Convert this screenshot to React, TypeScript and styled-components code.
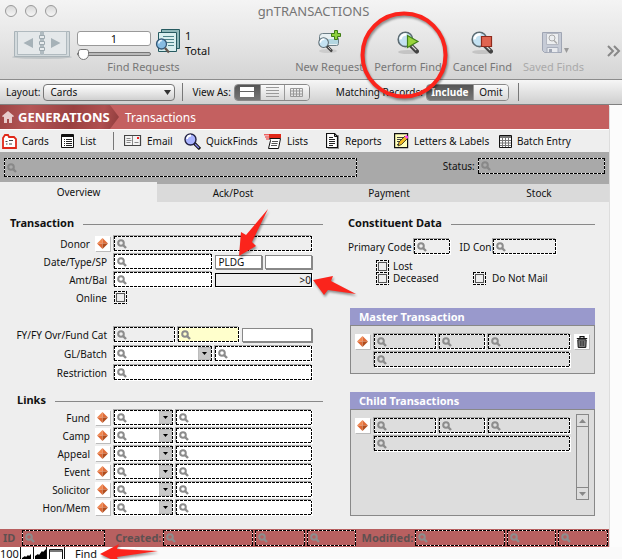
import React from "react";
import styled, { createGlobalStyle, css } from "styled-components";

const sans = `"Noto Sans", sans-serif`;

const GlobalStyle = createGlobalStyle`
  *, *::before, *::after { box-sizing: border-box; }
  body { margin: 0; background: #fcfcfc; color: #111; font-family: ${sans}; font-size: 10px; }
  button, input, select { font: inherit; color: inherit; margin: 0; padding: 0; border: 0; background: none; border-radius: 0; outline: 0; }
  a { color: inherit; text-decoration: none; }
  h1, h2, p { margin: 0; }
  svg { display: block; flex: none; }
`;

const Page = styled.div`
  position: relative;
  display: flex;
  flex-direction: column;
  height: 100vh;
  overflow: hidden;
`;

/* ---------- window chrome ---------- */

const Chrome = styled.header`
  height: 80px;
  flex: none;
  background: linear-gradient(#f4f4f4, #e6e6e6 50%, #d4d4d4);
  border-bottom: 1px solid #8c8c8c;
  color: #777;
`;

const TitleBar = styled.div`
  display: grid;
  grid-template-columns: 1fr auto 1fr;
  align-items: center;
  height: 22px;
  padding-left: 5px;
`;

const Lights = styled.div`
  display: flex;
  gap: 8px;
`;

const Light = styled.button`
  && {
    width: 12px;
    height: 12px;
    border: 1px solid #9a9a9a;
    border-radius: 50%;
    background: linear-gradient(#d8d8d8, #f6f6f6);
  }
`;

const Title = styled.h1`
  font-size: 13px;
  line-height: 20px;
  font-weight: 400;
  color: #757575;
`;

const ToolRow = styled.div`
  display: flex;
  align-items: flex-start;
  height: 56px;
  padding: 6px 0 0 11px;
`;

const Requests = styled.div`
  display: grid;
  grid-template-columns: 62px 74px 26px auto;
  column-gap: 4px;
  width: 205px;
`;

const Counter = styled.div`
  display: flex;
  flex-direction: column;
  gap: 1px;
  padding-top: 3px;
`;

const CountInput = styled.input`
  && {
    width: 100%;
    height: 15px;
    border: 1px solid #999;
    border-radius: 3px;
    background: #fff;
    color: #111;
    font-size: 11px;
    line-height: 13px;
    text-align: center;
  }
`;

const Slider = styled.input`
  appearance: none;
  width: 100%;
  height: 13px;
  &::-webkit-slider-runnable-track {
    height: 4px;
    border: 1px solid #777;
    border-radius: 2px;
    background: #bbb;
  }
  &::-webkit-slider-thumb {
    appearance: none;
    width: 11px;
    height: 11px;
    margin-top: -4px;
    border: 1px solid #777;
    border-radius: 3px 3px 6px 6px;
    background: #fff;
  }
`;

const Total = styled.p`
  font-size: 11px;
  line-height: 15px;
  color: #111;
`;

const Caption = styled.p`
  grid-column: 1 / -1;
  padding-left: 60px;
  width: 205px;
  font-size: 11px;
  line-height: 14px;
  text-align: center;
`;

const Tools = styled.div`
  display: flex;
  flex: 1;
  justify-content: flex-end;
  gap: 11px;
  align-items: flex-start;
  padding-right: 1px;
`;

const Tool = styled.button<{ $dim?: boolean }>`
  && {
    display: flex;
    flex-direction: column;
    align-items: center;
    gap: 5px;
    font-size: 11px;
    line-height: 16px;
    white-space: nowrap;
    color: ${(p) => (p.$dim ? "#aaa" : "#777")};
  }
`;

const LayoutBar = styled.div`
  display: flex;
  flex: none;
  align-items: center;
  height: 25px;
  padding-left: 6px;
  background: linear-gradient(#f6f6f6, #cfcfcf);
  border-bottom: 1px solid #808080;
  font-size: 10px;
  line-height: 14px;
  white-space: nowrap;
`;

const BarItem = styled.div<{ $w: number }>`
  display: flex;
  align-items: center;
  justify-content: space-between;
  flex: none;
  min-width: ${(p) => p.$w}px;
  gap: 3px;
`;

const LayoutPick = styled.div`
  position: relative;
  flex: none;
  width: 132px;
  select {
    appearance: none;
    display: block;
    width: 100%;
    height: 17px;
    padding-left: 6px;
    border: 1px solid #777;
    border-radius: 4px;
    background: linear-gradient(#fff, #d0d0d0);
  }
  svg { position: absolute; right: 4px; top: 6px; pointer-events: none; }
`;

const Divider = styled.span<{ $h: number; $l?: number; $r?: number }>`
  flex: none;
  width: 1px;
  height: ${(p) => p.$h}px;
  margin: 0 ${(p) => p.$r ?? 0}px 0 ${(p) => p.$l ?? 0}px;
  background: #777;
`;

const Spacer = styled.span`
  flex: none;
  width: 26px;
`;

const Segments = styled.div`
  display: flex;
  flex: none;
  overflow: hidden;
  height: 17px;
  border: 1px solid #888;
  border-radius: 4px;
`;

const Segment = styled.button<{ $on?: boolean; $w: number }>`
  display: flex;
  align-items: center;
  justify-content: center;
  width: ${(p) => p.$w}px;
  background: ${(p) => (p.$on ? "linear-gradient(#555, #777)" : "linear-gradient(#fafafa, #d8d8d8)")};
  color: ${(p) => (p.$on ? "#fff" : "#111")};
  font-weight: ${(p) => (p.$on ? 700 : 400)};
  & + & { border-left: 1px solid #999; }
`;

/* ---------- layout body ---------- */

const Body = styled.main`
  display: flex;
  flex: none;
  flex-direction: column;
  margin-right: 13px;
  background: #eee;
  box-shadow: 1px 1px 0 #ddd;
`;

const Banner = styled.div`
  display: flex;
  align-items: center;
  height: 24px;
  background: #c46060;
  color: #fff;
`;

const Brand = styled.div`
  display: flex;
  align-items: center;
  gap: 4px;
  width: 119px;
  height: 24px;
  padding-left: 2px;
  background: linear-gradient(100deg, #9c4444, #b45656 25%, #9a4141 60%, #b05050 85%, #8e3c3c);
  clip-path: polygon(0 0, 110px 0, 100% 50%, 110px 100%, 0 100%);
  font-weight: 700;
  font-size: 13px;
  line-height: 24px;
`;

const BannerTitle = styled.p`
  margin-left: 6px;
  font-size: 12px;
`;

const Nav = styled.nav`
  display: flex;
  align-items: center;
  height: 23px;
  padding-left: 2px;
  border-top: 1px solid #fff;
`;

const NavLink = styled.a<{ $w: number }>`
  display: flex;
  align-items: center;
  flex: ${(p) => p.$w} 1 ${(p) => p.$w}px;
  gap: 5px;
  white-space: nowrap;
`;

const RecordStrip = styled.div`
  display: flex;
  align-items: flex-start;
  height: 32px;
  padding: 6px 4px 0;
  background: #a9a9a9;
`;

const StatusLabel = styled.label`
  display: flex;
  justify-content: flex-end;
  flex: 121 1 121px;
  padding-right: 3px;
  line-height: 17px;
`;

const Tabs = styled.div`
  display: grid;
  grid-template-columns: 157fr 152fr 160fr 140fr;
  height: 18px;
`;

const Tab = styled.button<{ $on?: boolean }>`
  && {
    line-height: 18px;
    background: ${(p) => (p.$on ? "#eee" : "#dadada")};
    ${(p) => p.$on && css`margin-top: -2px;`}
  }
`;

const dash = (deg: number) => `repeating-linear-gradient(${deg}deg, #000 0 3px, #fff 3px 4px)`;

const FieldBox = styled.span<{ $w?: number; $h?: number; $bg?: string; $bevel?: boolean }>`
  display: flex;
  align-items: center;
  flex: ${(p) => (p.$w ? `${p.$w} 1 ${p.$w}px` : "1 1 0")};
  min-width: 0;
  height: ${(p) => p.$h ?? 15}px;
  padding: 0 1px 0 3px;
  background:
    ${dash(90)} 0 0 / 100% 1px no-repeat,
    ${dash(90)} 0 100% / 100% 1px no-repeat,
    ${dash(180)} 0 0 / 1px 100% no-repeat,
    ${dash(180)} 100% 0 / 1px 100% no-repeat,
    ${(p) => p.$bg ?? "transparent"};
  ${(p) => p.$bevel && css`box-shadow: -1px -1px 0 #aaa, 1px 1px 0 #fff;`}
  input { flex: 1; width: 0; min-width: 0; height: 100%; }
`;

const PlainInput = styled.input<{ $w: number; $solid?: boolean }>`
  && {
    flex: ${(p) => p.$w} 1 ${(p) => p.$w}px;
    width: 0;
    min-width: 0;
    height: 14px;
    padding: 0 3px;
    border: 1px solid #888;
    background: #fff;
    box-shadow: 1px 1px 0 #888;
    ${(p) => p.$solid && css`
      padding: 0;
      border-color: #000;
      background: #eee;
      box-shadow: 1px 1px 0 #fff;
      text-align: right;
    `}
  }
`;

const DropButton = styled.button`
  && {
    display: flex;
    align-items: center;
    justify-content: center;
    flex: none;
    width: 13px;
    height: 13px;
    background: #c8c8c8;
    border: 1px solid #bbb;
  }
`;

const Columns = styled.div`
  display: flex;
  gap: 25px;
  height: 327px;
  padding: 13px 14px 0 10px;
`;

const Column = styled.div<{ $w: number }>`
  display: flex;
  flex-direction: column;
  flex: ${(p) => p.$w} 1 0;
  min-width: 0;
`;

const Heading = styled.h2<{ $inset?: number; $top?: number }>`
  display: flex;
  align-items: center;
  gap: 9px;
  margin-top: ${(p) => p.$top ?? 0}px;
  padding-left: ${(p) => p.$inset ?? 0}px;
  font-size: 11px;
  line-height: 16px;
  white-space: nowrap;
  &::after { content: ""; flex: 1; height: 1px; margin-top: 3px; background: #888; }
`;

const Rows = styled.div<{ $top?: number; $gap?: number }>`
  display: flex;
  flex-direction: column;
  gap: ${(p) => p.$gap ?? 3}px;
  padding: ${(p) => p.$top ?? 0}px 11px 0 0;
`;

const Row = styled.div`
  display: flex;
  align-items: center;
  gap: 3px;
  height: 15px;
`;

const RowLabel = styled.label<{ $jump?: boolean }>`
  flex: none;
  width: ${(p) => (p.$jump ? 80 : 97)}px;
  margin-right: ${(p) => (p.$jump ? 2 : 4)}px;
  text-align: right;
  white-space: nowrap;
`;

const JumpButton = styled.button`
  && {
    display: flex;
    align-items: center;
    justify-content: center;
    flex: none;
    width: 15px;
    height: 15px;
    margin-right: 1px;
    background: #fff;
    box-shadow: 1px 1px 0 #bbb;
  }
`;

const Check = styled.input`
  && {
    appearance: none;
    flex: none;
    width: 13px;
    height: 13px;
    background:
      linear-gradient(#eee, #eee) center / 7px 7px no-repeat,
      linear-gradient(#555, #555) center / 9px 9px no-repeat,
      ${dash(90)} 0 0 / 100% 1px no-repeat,
      ${dash(90)} 0 100% / 100% 1px no-repeat,
      ${dash(180)} 0 0 / 1px 100% no-repeat,
      ${dash(180)} 100% 0 / 1px 100% no-repeat;
  }
`;

const ConRow = styled.div`
  display: flex;
  align-items: center;
  gap: 2px;
  padding: 8px 39px 6px 0;
  white-space: nowrap;
`;

const ConLabel = styled.label`
  &:not(:first-child) { margin-left: 8px; }
`;

const Checks = styled.div`
  display: grid;
  grid-template-columns: 97fr 122fr;
  padding-left: 28px;
`;

const CheckLabel = styled.label<{ $second?: boolean }>`
  display: flex;
  align-items: center;
  gap: 4px;
  height: 12px;
  line-height: 12px;
  ${(p) => p.$second && css`grid-column: 2; gap: 6px;`}
`;

const Panel = styled.section<{ $h: number; $top: number }>`
  height: ${(p) => p.$h}px;
  margin: ${(p) => p.$top}px 0 0 2px;
  border: 1px solid #888;
  background: #ddd;
`;

const PanelTitle = styled.h2`
  height: 18px;
  margin: -1px -1px 0;
  padding-left: 9px;
  background: #99c;
  border-bottom: 1px solid #888;
  color: #fff;
  font-size: 11px;
  line-height: 17px;
`;

const PanelBody = styled.div`
  display: grid;
  grid-template-columns: 15px 1fr 15px;
  column-gap: 4px;
  padding: 8px 5px 0 4px;
`;

const PanelFields = styled.div`
  display: flex;
  flex-direction: column;
  gap: 3px;
`;

const PanelRow = styled.div`
  display: flex;
  gap: 3px;
`;

const ScrollTrack = styled.div`
  display: flex;
  flex-direction: column;
  justify-content: space-between;
  width: 13px;
  height: 86px;
  margin: -4px 0 0 2px;
  border: 1px solid #888;
`;

const ScrollButton = styled.button`
  && {
    display: flex;
    align-items: center;
    justify-content: center;
    height: 12px;
  }
  &&:first-child { border-bottom: 1px solid #888; }
  &&:last-child { border-top: 1px solid #888; }
`;

const Meta = styled.footer`
  display: flex;
  align-items: center;
  gap: 2px;
  height: 18px;
  padding: 0 1px 0 3px;
  background: #b86060;
  color: #5e5050;
  font-weight: 700;
  font-size: 11px;
`;

const MetaLabel = styled.label<{ $w: number; $start?: boolean }>`
  flex: none;
  width: ${(p) => p.$w}px;
  text-align: ${(p) => (p.$start ? "left" : "right")};
  line-height: 14px;
`;

const StatusBar = styled.div`
  display: flex;
  flex: none;
  height: 12px;
  line-height: 14px;
  font-size: 11px;
  background: linear-gradient(90deg, #fff 135px, #fafafa 135px);
`;

const StatusButton = styled.button<{ $w: number }>`
  && {
    display: flex;
    align-items: flex-end;
    justify-content: center;
    width: ${(p) => p.$w}px;
    height: 12px;
    border-right: 1px solid #111;
  }
`;

const Zoom = styled.span`
  width: 21px;
  border-right: 1px solid #111;
`;

const Mode = styled.span`
  padding-left: 10px;
`;

const Marks = styled.svg`
  position: absolute;
  left: 0;
  top: 0;
  pointer-events: none;
  filter: drop-shadow(1px 2px 1px rgba(0, 0, 0, 0.4));
`;

/* ---------- drawings ---------- */

const Loupe = ({ color = "#8c8c8c" }: { color?: string }) => (
  <svg width="10" height="10" viewBox="0 0 10 10" fill="none" stroke={color}>
    <circle cx="4" cy="4" r="2.800" strokeWidth="2" />
    <path d="M6 6l3 3" strokeWidth="2.400" />
  </svg>
);

const Diamond = () => (
  <svg width="11" height="11" viewBox="0 0 11 11">
    <path d="M5.500 0v5.500H0z" fill="#f08850" />
    <path d="M5.500 0L11 5.500H5.500z" fill="#e06c38" />
    <path d="M0 5.500h5.500V11z" fill="#dc6632" />
    <path d="M11 5.500L5.500 11V5.500z" fill="#b04c1c" />
  </svg>
);

const Caret = ({ w = 5, h = 3, color = "#000", up = false }) => (
  <svg width={w} height={h} viewBox="0 0 10 6" preserveAspectRatio="none"><path d={up ? "M0 6h10L5 0z" : "M0 0h10L5 6z"} fill={color} /></svg>
);

const Trash = () => (
  <svg width="12" height="12" viewBox="0 0 12 12">
    <path d="M4 2V.7h4V2M.8 2.500h10.400" stroke="#111" fill="none" strokeWidth="1.200" />
    <path d="M1.800 3.800h8.400L9.800 11.400H2.200z" fill="#888" stroke="#111" />
    <path d="M4.300 5v5M6 5v5M7.700 5v5" stroke="#222" strokeWidth=".8" />
  </svg>
);

const Book = () => (
  <svg width="62" height="32" viewBox="0 0 62 32">
    <ellipse cx="31" cy="29" rx="30" ry="2" fill="#bfc4c6" />
    <path d="M3.500 3.500h55v25h-55z" fill="#d3dadd" stroke="#a9b3b8" />
    <path d="M6.500 3.500h23v23h-23zM32.500 3.500h23v23h-23z" fill="#e4e8ea" stroke="#b0babf" />
    <path d="M22 10v10l-9.500-5zM40 10v10l9.500-5z" fill="#a6b2b8" />
    <path d="M31 4v23" stroke="#a6b2b8" strokeWidth="1.500" />
    <path d="M28.500 7.500h5v3h-5zM28.500 13.500h5v3h-5zM28.500 19.500h5v3h-5z" fill="#e8ecee" stroke="#9da9af" />
  </svg>
);

const Glass = ({ x = 0, y = 0, s = 1 }) => (
  <g transform={`translate(${x} ${y}) scale(${s})`}>
    <path d="M10.500 11l6 6" stroke="#444" strokeWidth="3.600" strokeLinecap="round" />
    <path d="M12.500 12.500l3.500 3.500" stroke="#ddd" strokeWidth="1" />
    <circle cx="7" cy="7" r="6" fill="#c4e2f2" stroke="#5c6b72" strokeWidth="1.300" />
    <path d="M3 7a4 4 0 0 1 5-4" stroke="#fff" strokeWidth="2" fill="none" />
  </g>
);

const Pages = () => (
  <svg width="26" height="26" viewBox="0 0 26 26">
    <path d="M6.500 1.500h18v19h-18z" fill="#8fb8ba" stroke="#265a60" />
    <path d="M3.500 4.500h18v19h-18z" fill="#d8eeee" stroke="#265a60" />
    <path d="M8 8.500h11M8 11.500h11M11 14.500h8M13 17.500h6" stroke="#4c8288" />
    <circle cx="6.500" cy="16" r="5" fill="#86bce2" stroke="#365a78" strokeWidth="1.300" />
    <path d="M3.800 15.500a3 3 0 0 1 3-3" stroke="#e8f6ff" strokeWidth="1.500" fill="none" />
    <path d="M10 20l4 4.500" stroke="#665850" strokeWidth="2.400" />
  </svg>
);

const NewRequestIcon = () => (
  <svg width="26" height="26" viewBox="0 0 26 26">
    <ellipse cx="12" cy="23" rx="9" ry="2" fill="#ccc" />
    <path d="M3.500 8.500q0-3 3-3h12l4 5v5q0 2-2 2h-15q-2 0-2-2z" fill="#e8f0f2" stroke="#6c7e86" />
    <path d="M4 11h18v5H4z" fill="#b4d6e0" />
    <Glass x={2} y={9} s={0.8} />
    <path d="M18.500 2.500h3v3h3v3h-3v3h-3v-3h-3v-3h3z" fill="#8ed03c" stroke="#3f7c14" />
  </svg>
);

const PerformIcon = () => (
  <svg width="26" height="26" viewBox="0 0 26 26">
    <ellipse cx="13" cy="24" rx="10" ry="2" fill="#c4c4c4" />
    <Glass x={2} y={3} s={1.2} />
    <path d="M12.500 7.500v12l10.500-6z" fill="#9ad43c" stroke="#42811a" strokeWidth="1.200" />
  </svg>
);

const CancelIcon = () => (
  <svg width="26" height="26" viewBox="0 0 26 26">
    <ellipse cx="13" cy="24" rx="10" ry="2" fill="#c4c4c4" />
    <Glass x={2} y={3} s={1.2} />
    <path d="M12.500 8.500h10v10h-10z" fill="#e06450" stroke="#8f2a1c" strokeWidth="1.200" />
  </svg>
);

const SavedIcon = () => (
  <svg width="32" height="26" viewBox="0 0 32 26">
    <path d="M5.500 4.500h19v20h-17l-2-2z" fill="#c6cbd6" stroke="#a0a6b4" />
    <path d="M9.500 5.500h12v11h-12z" fill="#eceef0" stroke="#b4b8c2" />
    <circle cx="15" cy="10" r="3" fill="none" stroke="#aaa" />
    <path d="M17 12.500l3 3" stroke="#aaa" strokeWidth="1.500" />
    <path d="M10 19.500h11v5H10z" fill="#e8eaee" stroke="#a8aebc" />
    <path d="M12 21h3v3h-3z" fill="#a0a6b4" />
    <path d="M27 20h5l-2.500 5z" fill="#999" />
  </svg>
);

const Home = () => (
  <svg width="12" height="13" viewBox="0 0 12 13"><path d="M6 0l6 5-1 1.200L10 5.500V12H7V8H5v4H2V5.500L1 6.200 0 5z" fill="#e8cccc" /></svg>
);

const CardsIcon = () => (
  <svg width="15" height="15" viewBox="0 0 15 15">
    <path d="M1 4l2-3h3l1 2h5l2 2v9H1z" fill="#fff" stroke="#e02818" strokeWidth="1.800" />
    <path d="M3.500 7.500h2M7 6.500h4M4 10h1.500M7 10h3" stroke="#444" />
  </svg>
);
const ListIcon = () => (
  <svg width="14" height="15" viewBox="0 0 14 15">
    <path d="M.5.500h12v13H.5z" fill="#fff" stroke="#111" /><path d="M1 2h11" stroke="#111" strokeWidth="2" />
    <path d="M3 5.500h1M5 5.500h6M3 7.500h1M5 7.500h6M3 9.500h1M5 9.500h6M3 11.500h1M5 11.500h6" stroke="#222" />
  </svg>
);
const MailIcon = () => (
  <svg width="18" height="12" viewBox="0 0 18 12">
    <path d="M.5.500h16v10H.5z" fill="#f4f4f4" stroke="#444" strokeWidth="1.200" />
    <path d="M2.500 3.500h4M2.500 5.500h5M2.500 7.500h4M8.500 1v9M10.500 7.500h4" stroke="#888" /><path d="M13 2h2v2h-2z" fill="#e22" />
  </svg>
);
const QuickIcon = () => (
  <svg width="17" height="17" viewBox="0 0 17 17">
    <path d="M10 10l6 6" stroke="#111" strokeWidth="3.200" /><path d="M11 11l4 4" stroke="#88e" strokeWidth="1.200" />
    <circle cx="6.500" cy="6.500" r="5.500" fill="#aab4ff" stroke="#224" strokeWidth="1.400" />
    <path d="M3 6a4 4 0 0 1 4-3.500" stroke="#fff" strokeWidth="1.800" fill="none" />
  </svg>
);
const ListsIcon = () => (
  <svg width="18" height="15" viewBox="0 0 18 15">
    <path d="M5.500 4.500h11l-2 10h-10l2-8z" fill="#fff" stroke="#111" />
    <path d="M0 .8h5M1 3h4M2 5h3" stroke="#e22" /><path d="M5 0h12v4H5z" fill="#e02818" />
    <path d="M8 7.500h6M7.500 9.500h6M7 11.500h6" stroke="#555" />
  </svg>
);
const ReportIcon = () => (
  <svg width="14" height="16" viewBox="0 0 14 16">
    <path d="M2 2h11v14H2z" fill="#999" /><path d="M.5.500h8l3 3v11H.5z" fill="#fff" stroke="#111" strokeWidth="1.200" />
    <path d="M8.500.500v3h3" stroke="#111" fill="none" /><path d="M3 4.500h4M3 6.500h6M3 8.500h6M3 10.500h6M3 12.500h4" stroke="#222" />
  </svg>
);
const LetterIcon = () => (
  <svg width="15" height="16" viewBox="0 0 15 16">
    <path d="M.6.600h13v14H.6z" fill="#ffffb8" stroke="#111" strokeWidth="1.200" />
    <path d="M3 4.500h7M3 6.500h5M3 8.500h4M3 11.500h3" stroke="#444" />
    <path d="M4 13l1-4 6-6 2.500 2.500-6 6z" fill="#f0b820" stroke="#222" strokeWidth=".8" /><path d="M10.500 3.500L12.500 2 14.500 4 13 6z" fill="#f4e" />
  </svg>
);
const BatchIcon = () => (
  <svg width="13" height="13" viewBox="0 0 13 13">
    <path d="M.5.500h12v12H.5z" fill="#fff" stroke="#111" /><path d="M1 2h11" stroke="#777" strokeWidth="2" />
    <path d="M1 5.500h11M1 8h11M1 10.500h11M3.500 3v9M6.500 3v9M9.500 3v9" stroke="#777" />
  </svg>
);

/* ---------- parts ---------- */

type FieldProps = { label: string; id?: string; w?: number; h?: number; bg?: string; bevel?: boolean; drop?: boolean; loupe?: string };

const Field = ({ label, id, w, h, bg, bevel = true, drop, loupe }: FieldProps) => (
  <FieldBox $w={w} $h={h} $bg={bg} $bevel={bevel}>
    <Loupe color={loupe} />
    <input id={id} aria-label={id ? undefined : label} />
    {drop && <DropButton aria-label={`${label} choices`}><Caret /></DropButton>}
  </FieldBox>
);

const links = ["Fund", "Camp", "Appeal", "Event", "Solicitor", "Hon/Mem"];

const LinkedRecord = ({ name }: { name: string }) => (
  <PanelFields>
    <PanelRow>
      <Field label={`${name} date`} w={63} />
      <Field label={`${name} type`} w={47} />
      <Field label={`${name} amount`} w={84} />
    </PanelRow>
    <PanelRow><Field label={`${name} description`} /></PanelRow>
  </PanelFields>
);

export default function App() {
  return (
    <Page>
      <GlobalStyle />
      <Chrome>
        <TitleBar>
          <Lights><Light aria-label="Close" /><Light aria-label="Minimize" /><Light aria-label="Zoom" /></Lights>
          <Title>gnTRANSACTIONS</Title>
        </TitleBar>
        <ToolRow>
          <Requests>
            <Book />
            <Counter>
              <CountInput aria-label="Find request" defaultValue="1" />
              <Slider type="range" aria-label="Request slider" min={1} max={10} defaultValue={1} />
            </Counter>
            <Pages />
            <Total>1<br />Total</Total>
            <Caption>Find Requests</Caption>
          </Requests>
          <Tools>
            <Tool><NewRequestIcon />New Request</Tool>
            <Tool><PerformIcon />Perform Find</Tool>
            <Tool><CancelIcon />Cancel Find</Tool>
            <Tool $dim><SavedIcon />Saved Finds</Tool>
            <Tool aria-label="More tools">
              <svg width="26" height="40" viewBox="0 0 26 40" fill="none" stroke="#888" strokeWidth="2"><path d="M13 18l5 5-5 5M19 18l5 5-5 5" /></svg>
            </Tool>
          </Tools>
        </ToolRow>
      </Chrome>
      <LayoutBar>
        <BarItem $w={168}>
          <label htmlFor="layout">Layout:</label>
          <LayoutPick>
            <select id="layout"><option>Cards</option></select>
            <Caret w={7} h={5} color="#333" />
          </LayoutPick>
        </BarItem>
        <Divider $h={18} $l={7} $r={9} />
        <BarItem $w={115}>
          <span>View As:</span>
          <Segments>
            <Segment $w={25} $on aria-label="Form view"><svg width="14" height="10"><path d="M0 0h14v4H0zM0 5h14v5H0z" fill="#fff" /></svg></Segment>
            <Segment $w={24} aria-label="List view"><svg width="13" height="10"><path d="M0 .5h13M0 3.500h13M0 6.500h13M0 9.500h13" stroke="#999" /></svg></Segment>
            <Segment $w={25} aria-label="Table view"><svg width="13" height="9"><path d="M.5.500h12v8H.5zM0 3h13M0 6h13M3.500 0v9M6.500 0v9M9.500 0v9" stroke="#999" fill="none" /></svg></Segment>
          </Segments>
        </BarItem>
        <Spacer />
        <BarItem $w={166}>
          <span>Matching Records:</span>
          <Segments>
            <Segment $w={46} $on>Include</Segment>
            <Segment $w={35}>Omit</Segment>
          </Segments>
        </BarItem>
        <Divider $h={18} $l={9} />
      </LayoutBar>

      <Body>
        <Banner>
          <Brand><Home />GENERATIONS</Brand>
          <BannerTitle>Transactions</BannerTitle>
        </Banner>
        <Nav>
          <NavLink $w={59} href="#cards"><CardsIcon />Cards</NavLink>
          <NavLink $w={52} href="#list"><ListIcon />List</NavLink>
          <Divider $h={18} $r={10} />
          <NavLink $w={60} href="#email"><MailIcon />Email</NavLink>
          <NavLink $w={80} href="#quickfinds"><QuickIcon />QuickFinds</NavLink>
          <NavLink $w={62} href="#lists"><ListsIcon />Lists</NavLink>
          <NavLink $w={68} href="#reports"><ReportIcon />Reports</NavLink>
          <NavLink $w={105} href="#letters"><LetterIcon />Letters &amp; Labels</NavLink>
          <NavLink $w={110} href="#batch"><BatchIcon />Batch Entry</NavLink>
        </Nav>
        <RecordStrip>
          <Field label="Record name" w={352} h={19} bevel={false} loupe="#888" />
          <StatusLabel htmlFor="status">Status:</StatusLabel>
          <Field label="Status" id="status" w={127} h={16} bevel={false} loupe="#888" />
        </RecordStrip>
        <Tabs>
          <Tab $on>Overview</Tab><Tab>Ack/Post</Tab><Tab>Payment</Tab><Tab>Stock</Tab>
        </Tabs>

        <Columns>
          <Column $w={313}>
            <Heading>Transaction</Heading>
            <Rows $top={5}>
              <Row>
                <RowLabel $jump htmlFor="donor">Donor</RowLabel>
                <JumpButton aria-label="Go to donor"><Diamond /></JumpButton>
                <Field label="Donor" id="donor" />
              </Row>
              <Row>
                <RowLabel htmlFor="date">Date/Type/SP</RowLabel>
                <Field label="Date" id="date" w={97} bg="#fff" />
                <PlainInput $w={47} aria-label="Type" defaultValue="PLDG" />
                <PlainInput $w={47} aria-label="SP" />
              </Row>
              <Row>
                <RowLabel htmlFor="amt">Amt/Bal</RowLabel>
                <Field label="Amount" id="amt" w={97} bg="#fff" />
                <PlainInput $w={97} $solid aria-label="Balance" defaultValue=">0" />
              </Row>
              <Row>
                <RowLabel htmlFor="online">Online</RowLabel>
                <Check type="checkbox" id="online" />
              </Row>
            </Rows>
            <Rows $top={22} $gap={4}>
              <Row>
                <RowLabel htmlFor="fy">FY/FY Ovr/Fund Cat</RowLabel>
                <Field label="FY" id="fy" w={61} />
                <Field label="FY override" w={61} bg="#ffc" />
                <PlainInput $w={70} aria-label="Fund category" />
              </Row>
              <Row>
                <RowLabel htmlFor="gl">GL/Batch</RowLabel>
                <Field label="GL" id="gl" w={97} bg="#fff" drop />
                <Field label="Batch" w={97} bg="#fff" />
              </Row>
              <Row>
                <RowLabel htmlFor="restriction">Restriction</RowLabel>
                <Field label="Restriction" id="restriction" bg="#fff" />
              </Row>
            </Rows>
            <Heading $inset={7} $top={12}>Links</Heading>
            <Rows $top={2}>
              {links.map((name) => (
                <Row key={name}>
                  <RowLabel $jump htmlFor={name}>{name}</RowLabel>
                  <JumpButton aria-label={`Go to ${name}`}><Diamond /></JumpButton>
                  <Field label={name} id={name} w={59} bg="#fff" drop />
                  <Field label={`${name} name`} w={136} bg="#fff" />
                </Row>
              ))}
            </Rows>
          </Column>

          <Column $w={247}>
            <Heading>Constituent Data</Heading>
            <ConRow>
              <ConLabel htmlFor="code">Primary Code</ConLabel>
              <Field label="Primary Code" id="code" w={35} />
              <ConLabel htmlFor="con">ID Con</ConLabel>
              <Field label="ID Con" id="con" w={61} />
            </ConRow>
            <Checks>
              <CheckLabel><Check type="checkbox" />Lost</CheckLabel>
              <span />
              <CheckLabel><Check type="checkbox" />Deceased</CheckLabel>
              <CheckLabel $second><Check type="checkbox" />Do Not Mail</CheckLabel>
            </Checks>
            <Panel $h={66} $top={24}>
              <PanelTitle>Master Transaction</PanelTitle>
              <PanelBody>
                <JumpButton aria-label="Go to master transaction"><Diamond /></JumpButton>
                <LinkedRecord name="Master" />
                <JumpButton aria-label="Remove master transaction"><Trash /></JumpButton>
              </PanelBody>
            </Panel>
            <Panel $h={124} $top={18}>
              <PanelTitle>Child Transactions</PanelTitle>
              <PanelBody>
                <JumpButton aria-label="Go to child transaction"><Diamond /></JumpButton>
                <LinkedRecord name="Child" />
                <ScrollTrack>
                  <ScrollButton aria-label="Scroll up"><Caret up color="#888" w={7} h={4} /></ScrollButton>
                  <ScrollButton aria-label="Scroll down"><Caret color="#888" w={7} h={4} /></ScrollButton>
                </ScrollTrack>
              </PanelBody>
            </Panel>
          </Column>
        </Columns>

        <Meta>
          <MetaLabel $w={17} $start htmlFor="rid">ID</MetaLabel>
          <Field label="ID" id="rid" w={84} h={16} bevel={false} />
          <MetaLabel $w={54} htmlFor="created">Created:</MetaLabel>
          <Field label="Created" id="created" w={90} h={16} bevel={false} />
          <Field label="Created time" w={50} h={16} bevel={false} />
          <Field label="Created by" w={50} h={16} bevel={false} />
          <MetaLabel $w={55} htmlFor="modified">Modified:</MetaLabel>
          <Field label="Modified" id="modified" w={90} h={16} bevel={false} />
          <Field label="Modified time" w={50} h={16} bevel={false} />
          <Field label="Modified by" w={50} h={16} bevel={false} />
        </Meta>
      </Body>

      <StatusBar>
        <Zoom>100</Zoom>
        <StatusButton $w={13} aria-label="Zoom out"><svg width="10" height="6"><path d="M0 6V5l3-2 1 1 2-2 1 1 2-2v5z" /></svg></StatusButton>
        <StatusButton $w={13} aria-label="Zoom in"><svg width="11" height="10"><path d="M0 10V7l3-2 1 1 3-4 1 1 3-3v10z" /></svg></StatusButton>
        <StatusButton $w={18} aria-label="Toggle status area"><svg width="14" height="10"><path d="M.5.500h13v12H.5z" fill="#fff" stroke="#111" /><path d="M1 2h12" stroke="#777" strokeWidth="2" /></svg></StatusButton>
        <Mode>Find</Mode>
      </StatusBar>

      <Marks width="622" height="559" viewBox="0 0 622 559" fill="#fb241c">
        <circle cx="404" cy="55" r="41.500" fill="none" stroke="#fb241c" strokeWidth="4" />
        <path d="M268 209L246 235 241 232 239 256 256 246 252 242z" />
        <path d="M313 280L333 276 331 281 356 294 328 290 324 295z" />
        <path d="M100 554L119 544 117 549 158 551 117 557 119 563z" />
      </Marks>
    </Page>
  );
}
